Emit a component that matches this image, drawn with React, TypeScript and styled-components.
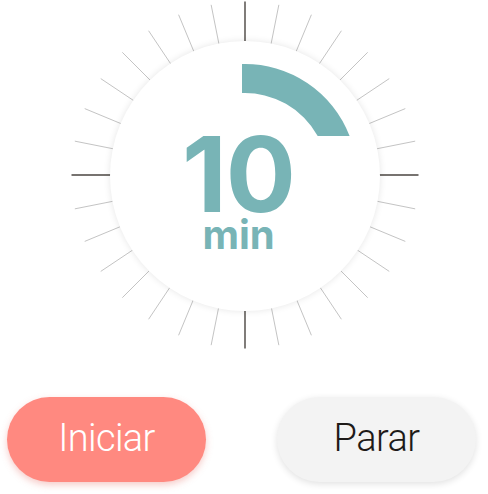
import React from 'react';
import styled, { createGlobalStyle } from 'styled-components';

const GlobalStyle = createGlobalStyle`
    html, body {
        margin: 0;
        padding: 0;
        background: #ffffff;
    }
    body {
        font-family: "Roboto", "Liberation Sans", sans-serif;
    }
`;

const TICKS = 32;
const SIZE = 348;
const C = SIZE / 2;

const Ticks = () => {
    const lines = [];
    for (let i = 0; i < TICKS; i++) {
        const a = (i * 360 / TICKS) * Math.PI / 180;
        const major = i % 8 === 0;
        const r1 = 128;
        const r2 = 173.5;
        lines.push(
            <line
                key={i}
                x1={C + Math.sin(a) * r1}
                y1={C - Math.cos(a) * r1}
                x2={C + Math.sin(a) * r2}
                y2={C - Math.cos(a) * r2}
                stroke={major ? '#4a4541' : '#c4c4c4'}
                strokeWidth={major ? 1.4 : 1}
            />
        );
    }
    return (
        <TickSvg width={SIZE} height={SIZE} viewBox={`0 0 ${SIZE} ${SIZE}`}>
            {lines}
        </TickSvg>
    );
};

const Arc = () => (
    <ArcSvg width="270" height="270" viewBox="0 0 270 270">
        <path
            d="M132 23.04 A112 112 0 0 1 239.6 95 L207.7 95 A83 83 0 0 0 132 52.05 Z"
            fill="#78b4b6"
        />
    </ArcSvg>
);

const App = () => {
    return (
        <Page>
            <GlobalStyle />
            <Dial>
                <Ticks />
                <Face>
                    <Arc />
                    <Readout>
                        <Minutes>10</Minutes>
                        <Unit>min</Unit>
                    </Readout>
                </Face>
            </Dial>
            <ButtonRow>
                <PillButton variant="primary">Iniciar</PillButton>
                <PillButton variant="secondary">Parar</PillButton>
            </ButtonRow>
        </Page>
    );
};

export default App;

const Page = styled.div`
    width: 488px;
    height: 494px;
    display: flex;
    flex-direction: column;
    align-items: center;
    overflow: hidden;
`;

const Dial = styled.div`
    position: relative;
    width: ${SIZE}px;
    height: ${SIZE}px;
    margin-top: 1px;
    margin-left: 2px;
`;

const TickSvg = styled.svg`
    display: block;
`;

const Face = styled.div`
    position: absolute;
    left: 39px;
    top: 40px;
    width: 270px;
    height: 270px;
    border-radius: 50%;
    background: #ffffff;
    box-shadow: 0 0 7px rgba(0, 0, 0, 0.1);
    display: flex;
    align-items: center;
    justify-content: center;
`;

const ArcSvg = styled.svg`
    position: absolute;
    left: 0;
    top: 0;
`;

const Readout = styled.div`
    position: relative;
    display: flex;
    flex-direction: column;
    align-items: center;
    padding-right: 13px;
    margin-top: 32px;
    color: #78b4b6;
    font-family: "Inter", "Noto Sans", sans-serif;
    font-weight: 700;
`;

const Minutes = styled.div`
    font-size: 104px;
    line-height: 80px;
    letter-spacing: -1px;
`;

const Unit = styled.div`
    font-size: 40px;
    line-height: 30px;
    margin-top: 6px;
`;

const ButtonRow = styled.div`
    width: 100%;
    box-sizing: border-box;
    display: flex;
    justify-content: space-between;
    padding: 0 12px 0 7px;
    margin-top: 48px;
`;

const PillButton = styled.button<{ variant: 'primary' | 'secondary' }>`
    width: 199px;
    height: 85px;
    border: none;
    border-radius: 43px;
    font-family: "Roboto", "Liberation Sans", sans-serif;
    font-weight: 300;
    font-size: 38px;
    letter-spacing: -0.6px;
    padding: 0 0 4px;
    cursor: pointer;
    background: ${p => (p.variant === 'primary' ? '#ff8980' : '#f3f3f3')};
    color: ${p => (p.variant === 'primary' ? '#ffffff' : '#1e1a18')};
    box-shadow: ${p =>
        p.variant === 'primary'
            ? '0 3px 7px rgba(230, 110, 100, 0.35)'
            : '0 2px 7px rgba(0, 0, 0, 0.12)'};
`;
